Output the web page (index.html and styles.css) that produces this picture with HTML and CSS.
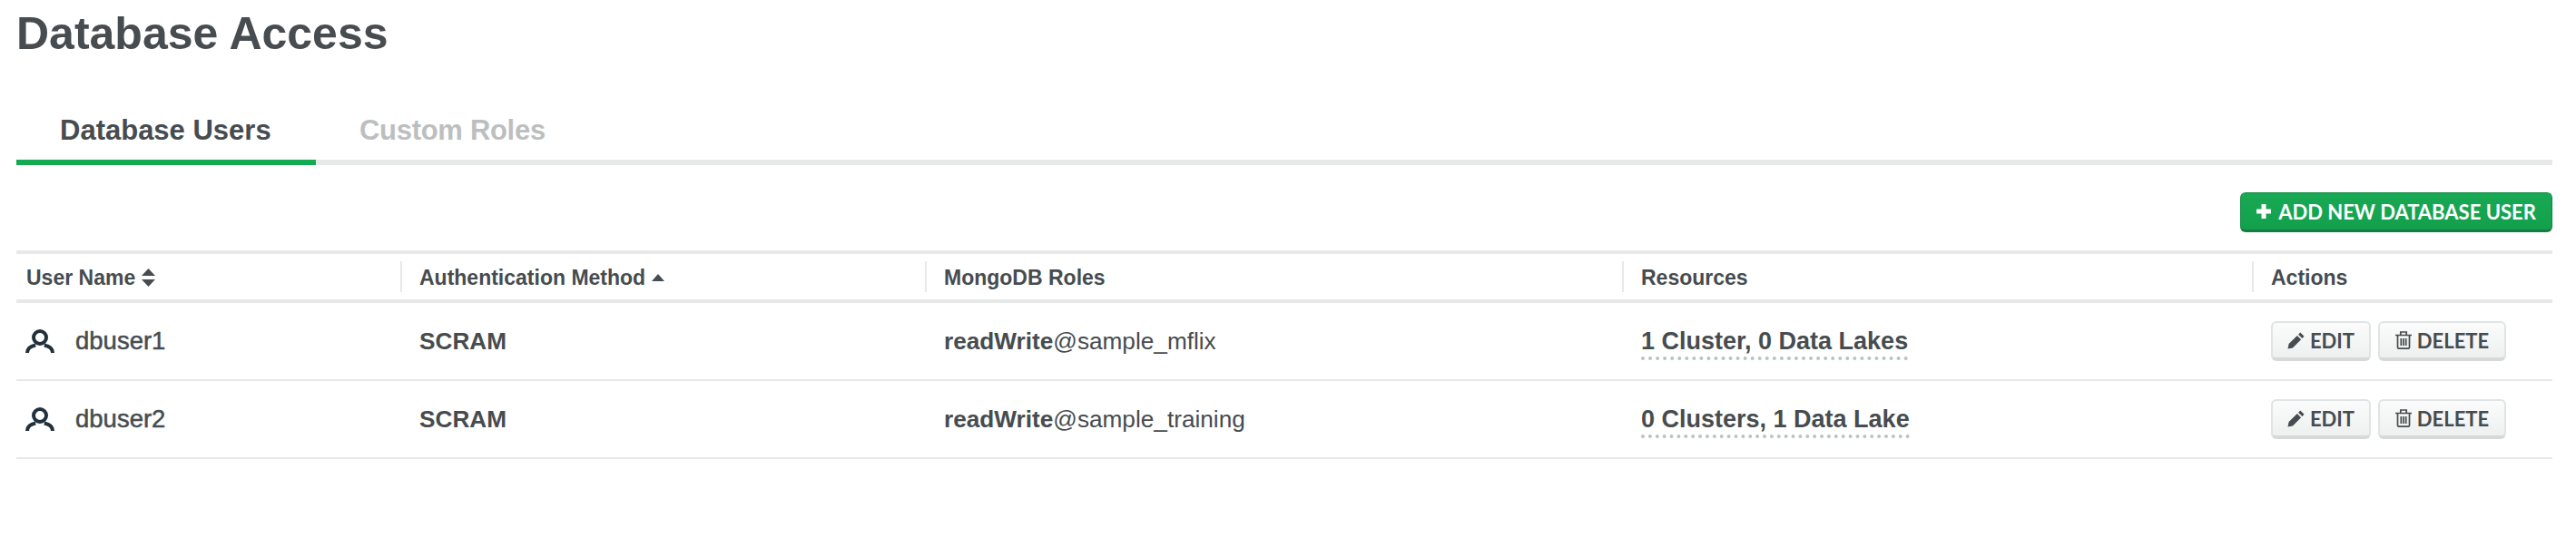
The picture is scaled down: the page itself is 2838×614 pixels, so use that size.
FILE: index.html
```html
<!DOCTYPE html>
<html lang="en">
<head>
<meta charset="utf-8">
<title>Database Access</title>
<link rel="stylesheet" href="styles.css">
</head>
<body>
<main class="page">
  <h1 class="title">Database Access</h1>
  <nav class="tabs">
    <a class="tab tab-active">Database Users</a>
    <a class="tab">Custom Roles</a>
  </nav>
  <div class="toolbar">
    <button class="btn-primary">
      <svg class="icon-plus" viewBox="0 0 16 16"><path d="M5.500 0h5v5.500H16v5h-5.500V16h-5v-5.500H0v-5h5.500z"/></svg>
      ADD NEW DATABASE USER
    </button>
  </div>
  <table class="users">
    <colgroup>
      <col class="c1"><col class="c2"><col class="c3"><col class="c4"><col class="c5">
    </colgroup>
    <thead>
      <tr>
        <th><span class="th-in">User Name
          <svg class="sort" viewBox="0 0 15 20"><path d="M7.500 0l7.500 8H0zM0 12h15l-7.500 8z"/></svg></span></th>
        <th><span class="th-in">Authentication Method
          <svg class="sort-up" viewBox="0 0 14 8"><path d="M7 0l7 8H0z"/></svg></span></th>
        <th><span class="th-in">MongoDB Roles</span></th>
        <th><span class="th-in">Resources</span></th>
        <th><span class="th-in">Actions</span></th>
      </tr>
    </thead>
    <tbody>
      <tr>
        <td><span class="user">
          <svg class="icon-user" viewBox="0 0 32 26"><circle cx="16" cy="9" r="7" fill="none" stroke="#21313c" stroke-width="4"/><path d="M2 26c0-5 4-7.500 9.200-8.500M20.800 17.500c5.200 1 9.200 3.500 9.200 8.500" fill="none" stroke="#21313c" stroke-width="4"/></svg>
          dbuser1</span></td>
        <td class="strong">SCRAM</td>
        <td><b class="strong">readWrite</b><span class="db">@sample_mflix</span></td>
        <td><span class="res">1 Cluster, 0 Data Lakes</span></td>
        <td><div class="actions">
          <button class="btn btn-edit"><svg class="icon-pencil" viewBox="0 0 20 20"><path d="M15 .5l4.500 4.500-2.300 2.300L12.700 2.800zM11.400 4.100l4.500 4.500L6.200 18.300.5 19.500l1.200-5.700z"/></svg>EDIT</button>
          <button class="btn btn-del"><svg class="icon-trash" viewBox="0 0 18 20"><path d="M0 4.500h18M5.800 4.500V1h6.400v3.500M2.500 4.500V18a1.300 1.300 0 0 0 1.300 1.200h10.400a1.300 1.300 0 0 0 1.300-1.200V4.500M6.300 8v8M9 8v8M11.700 8v8" fill="none" stroke="#464c4f" stroke-width="1.700"/></svg>DELETE</button>
        </div></td>
      </tr>
      <tr>
        <td><span class="user">
          <svg class="icon-user" viewBox="0 0 32 26"><circle cx="16" cy="9" r="7" fill="none" stroke="#21313c" stroke-width="4"/><path d="M2 26c0-5 4-7.500 9.200-8.500M20.800 17.500c5.200 1 9.200 3.500 9.200 8.500" fill="none" stroke="#21313c" stroke-width="4"/></svg>
          dbuser2</span></td>
        <td class="strong">SCRAM</td>
        <td><b class="strong">readWrite</b><span class="db">@sample_training</span></td>
        <td><span class="res">0 Clusters, 1 Data Lake</span></td>
        <td><div class="actions">
          <button class="btn btn-edit"><svg class="icon-pencil" viewBox="0 0 20 20"><path d="M15 .5l4.500 4.500-2.300 2.300L12.700 2.800zM11.400 4.100l4.500 4.500L6.200 18.300.5 19.500l1.200-5.700z"/></svg>EDIT</button>
          <button class="btn btn-del"><svg class="icon-trash" viewBox="0 0 18 20"><path d="M0 4.500h18M5.800 4.500V1h6.400v3.500M2.500 4.500V18a1.300 1.300 0 0 0 1.300 1.200h10.400a1.300 1.300 0 0 0 1.300-1.200V4.500M6.300 8v8M9 8v8M11.700 8v8" fill="none" stroke="#464c4f" stroke-width="1.700"/></svg>DELETE</button>
        </div></td>
      </tr>
    </tbody>
  </table>
</main>
</body>
</html>
```
FILE: styles.css
```css
* { box-sizing: border-box; }
html, body { margin: 0; background: #fff; }
body { font-family: "Liberation Sans", Arial, sans-serif; color: #464c4f; overflow: hidden; }
.page { padding: 0 26px 0 18px; }

.title {
  margin: 0;
  height: 72px;
  padding-top: 9px;
  font-size: 50px;
  line-height: 56px;
  font-weight: 700;
  color: #464c4f;
}

.tabs {
  display: flex;
  margin-top: 38px;
  height: 72px;
  border-bottom: 6px solid #e7e9e8;
}
.tab {
  height: 72px;
  padding: 16px 48px 0;
  font-size: 31px;
  line-height: 36px;
  font-weight: 700;
  color: #bcbfbf;
  letter-spacing: -0.3px;
}
.tab-active {
  color: #464c4f;
  border-bottom: 6px solid #13aa52;
  width: 330px;
  letter-spacing: 0;
}

.toolbar { display: flex; justify-content: flex-end; margin-top: 30px; }
.btn-primary {
  display: flex;
  align-items: center;
  justify-content: center;
  gap: 8px;
  width: 344px;
  height: 44px;
  padding: 0;
  font-family: Lato, "Liberation Sans", sans-serif;
  font-size: 22px;
  font-weight: 700;
  color: #fff;
  background: linear-gradient(#18a955, #13a04c);
  border: 1px solid #0e8a41;
  border-bottom: 3px solid #167c41;
  border-radius: 6px;
}
.icon-plus { width: 16px; height: 16px; fill: #fff; }

.users {
  width: 100%;
  margin-top: 20px;
  table-layout: fixed;
  border-collapse: separate;
  border-spacing: 0;
}
.c1 { width: 423px; }
.c2 { width: 578px; }
.c3 { width: 768px; }
.c4 { width: 694px; }
.c5 { width: 331px; }

th {
  height: 58px;
  padding: 0;
  text-align: left;
  font-size: 23px;
  font-weight: 700;
  color: #464c4f;
  border-top: 4px solid #e7e9e8;
  border-bottom: 4px solid #e7e9e8;
}
.th-in {
  display: flex;
  align-items: center;
  gap: 7px;
  height: 34px;
  padding: 2px 0 0 19px;
  border-left: 2px solid #e7e9e8;
}
th:first-child .th-in { border-left: 0; padding-left: 11px; }
.sort { width: 15px; height: 20px; fill: #464c4f; }
.sort-up { width: 14px; height: 8px; fill: #464c4f; }

td {
  height: 86px;
  padding: 0 0 0 21px;
  font-size: 26.2px;
  border-bottom: 2px solid #e7e9e8;
  color: #464c4f;
}
td:first-child { padding-left: 10px; }
.strong { font-weight: 700; }
.user { display: flex; align-items: center; gap: 23px; font-size: 27.5px; -webkit-text-stroke: 0.5px #464c4f; }
.icon-user { width: 32px; height: 26px; flex: none; }
.db { font-weight: 400; }
.res {
  font-size: 27px;
  font-weight: 700;
  padding-bottom: 2px;
  border-bottom: 4px dotted #b8c4c2;
}

.actions { display: flex; gap: 8px; }
.btn {
  display: flex;
  align-items: center;
  justify-content: center;
  gap: 6px;
  height: 44px;
  padding: 0;
  font-family: Lato, "Liberation Sans", sans-serif;
  font-size: 22px;
  font-weight: 700;
  color: #464c4f;
  background: linear-gradient(#fbfbfb, #eef0f0);
  border: 2px solid #e1e4e4;
  border-bottom: 4px solid #d5d9d9;
  border-radius: 6px;
}
.btn-edit { width: 110px; }
.btn-del { width: 141px; }
.icon-pencil { width: 19px; height: 19px; fill: #464c4f; }
.icon-trash { width: 18px; height: 20px; }
```
